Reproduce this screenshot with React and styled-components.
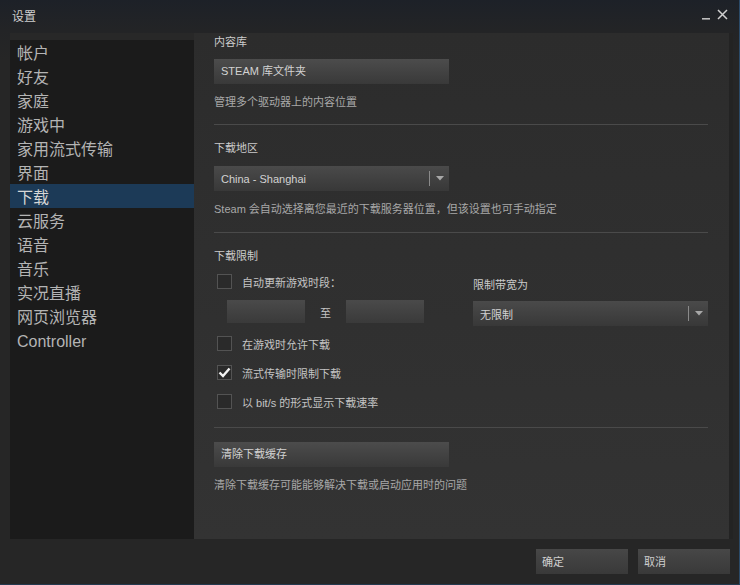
import styled, { createGlobalStyle } from 'styled-components';

const Global = createGlobalStyle`
    html, body{
        margin: 0;
        padding: 0;
        background: #262626;
    }
    *{
        box-sizing: border-box;
    }
`

const font = `"Liberation Sans", "Noto Sans CJK SC", sans-serif`;

const navItems = ['帐户', '好友', '家庭', '游戏中', '家用流式传输', '界面', '下载', '云服务', '语音', '音乐', '实况直播', '网页浏览器', 'Controller'];

const Arrow = () => (
    <svg width="8" height="5" viewBox="0 0 8 5">
        <path d="M0 0 L8 0 L4 4.5 Z" fill="#a8a8a8" />
    </svg>
);

const Check = () => (
    <svg width="13" height="11" viewBox="0 0 13 11">
        <path d="M1.5 5.5 L5 9 L11.5 1.5" stroke="#f2f2f2" strokeWidth="2.4" fill="none" />
    </svg>
);

const CheckRow = ({ checked, children }) => (
    <CheckRowStyled>
        <Box>{checked && <Check />}</Box>
        <span>{children}</span>
    </CheckRowStyled>
);

const Select = ({ value, width }) => (
    <SelectStyled $w={width}>
        <span>{value}</span>
        <div className='arrow'><Arrow /></div>
    </SelectStyled>
);

const App = () => {
    return (
        <Window>
            <Global />
            <TitleBar>
                <span>设置</span>
                <div className='controls'>
                    <svg width="9" height="10" viewBox="0 0 9 10">
                        <rect x="0" y="8" width="8" height="1.6" fill="#bdbdbd" />
                    </svg>
                    <svg width="11" height="11" viewBox="0 0 11 11">
                        <path d="M1 1 L10 10 M10 1 L1 10" stroke="#d0d0d0" strokeWidth="1.5" />
                    </svg>
                </div>
            </TitleBar>
            <Body>
                <Nav>
                    {navItems.map((item) => (
                        <NavItem key={item} $active={item === '下载'}>{item}</NavItem>
                    ))}
                </Nav>
                <Content>
                    <Label>内容库</Label>
                    <Button $top={10}>STEAM 库文件夹</Button>
                    <Desc>管理多个驱动器上的内容位置</Desc>
                    <Divider />
                    <Label $top={16}>下载地区</Label>
                    <Select value="China - Shanghai" width={235} />
                    <Desc>Steam 会自动选择离您最近的下载服务器位置，但该设置也可手动指定</Desc>
                    <Divider $top={16} />
                    <Label $top={16}>下载限制</Label>
                    <LimitRow>
                        <div className='left'>
                            <CheckRow>自动更新游戏时段：</CheckRow>
                            <TimeRow>
                                <TimeInput />
                                <span>至</span>
                                <TimeInput />
                            </TimeRow>
                        </div>
                        <div className='right'>
                            <Label $top={4}>限制带宽为</Label>
                            <Select value="无限制" width={235} />
                        </div>
                    </LimitRow>
                    <CheckList>
                        <CheckRow>在游戏时允许下载</CheckRow>
                        <CheckRow checked>流式传输时限制下载</CheckRow>
                        <CheckRow>以 bit/s 的形式显示下载速率</CheckRow>
                    </CheckList>
                    <Divider $top={18} />
                    <Button $top={14}>清除下载缓存</Button>
                    <Desc>清除下载缓存可能能够解决下载或启动应用时的问题</Desc>
                </Content>
                <Scroll />
            </Body>
            <Footer>
                <FooterButton>确定</FooterButton>
                <FooterButton>取消</FooterButton>
            </Footer>
        </Window>
    );
};

const Window = styled.div`
    width: 740px;
    height: 585px;
    display: flex;
    flex-direction: column;
    background: linear-gradient(to bottom, #1d2128 0px, #232426 30px, #262626 60px);
    border-right: 1px solid #2b4a68;
    border-bottom: 1px solid #24394f;
    font-family: ${font};
    overflow: hidden;
`

const TitleBar = styled.div`
    height: 33px;
    display: flex;
    justify-content: space-between;
    align-items: flex-start;
    padding: 7px 11px 0 12px;
    color: #cfcfcf;
    font-size: 12px;
    .controls{
        display: flex;
        gap: 6px;
        align-items: flex-end;
        margin-top: 2px;
    }
`

const Body = styled.div`
    height: 506px;
    display: flex;
    margin-left: 10px;
`

const Nav = styled.div`
    width: 184px;
    background: #1b1b1b;
    border-top: 7px solid #282828;
    font-size: 16px;
`

const NavItem = styled.div`
    height: 24px;
    line-height: 22px;
    padding: 3px 0 0 7px;
    color: ${p => p.$active ? '#d6d6d6' : '#b4b4b4'};
    background: ${p => p.$active ? '#1c3a57' : 'transparent'};
`

const Content = styled.div`
    width: 535px;
    padding: 2px 21px 0 20px;
    background: linear-gradient(to bottom, #2c2c2c, #333333);
    font-size: 11px;
    color: #c4c4c4;
`

const Scroll = styled.div`
    width: 4px;
    background: #232323;
`

const Label = styled.div`
    line-height: 14px;
    margin-top: ${p => p.$top || 0}px;
    color: #cbcbcb;
`

const Desc = styled.div`
    line-height: 14px;
    margin-top: 11px;
    color: #a8a8a8;
`

const Divider = styled.div`
    height: 1px;
    margin-top: ${p => p.$top || 15}px;
    background: #4a4a4a;
`

const Button = styled.div`
    width: 235px;
    height: 25px;
    margin-top: ${p => p.$top || 0}px;
    padding-left: 7px;
    line-height: 25px;
    color: #d2d2d2;
    background: linear-gradient(to bottom, #4c4c4c, #393939);
`

const SelectStyled = styled.div`
    width: ${p => p.$w}px;
    height: 25px;
    margin-top: 11px;
    display: flex;
    align-items: center;
    background: linear-gradient(to bottom, #4a4a4a, #383838);
    color: #d2d2d2;
    span{
        flex: 1;
        padding-left: 7px;
    }
    .arrow{
        width: 20px;
        height: 15px;
        border-left: 1px solid #8a8a8a;
        display: flex;
        align-items: center;
        justify-content: center;
    }
`

const LimitRow = styled.div`
    display: flex;
    height: 49px;
    margin-top: 11px;
    .left{
        width: 260px;
    }
    .right{
        width: 235px;
        ${SelectStyled}{
            margin-top: 9px;
        }
    }
`

const CheckRowStyled = styled.div`
    display: flex;
    align-items: center;
    height: 15px;
    padding-left: 3px;
    gap: 10px;
    color: #c4c4c4;
`

const Box = styled.div`
    width: 15px;
    height: 15px;
    border: 1px solid #535353;
    background: #2a2a2a;
    display: flex;
    align-items: center;
    justify-content: center;
`

const TimeRow = styled.div`
    display: flex;
    align-items: center;
    margin-top: 11px;
    padding-left: 13px;
    span{
        width: 41px;
        text-align: center;
        color: #c4c4c4;
    }
`

const TimeInput = styled.div`
    width: 78px;
    height: 23px;
    background: linear-gradient(to bottom, #4a4a4a, #3a3a3a);
`

const CheckList = styled.div`
    display: flex;
    flex-direction: column;
    gap: 14px;
    margin-top: 13px;
`

const Footer = styled.div`
    flex: 1;
    display: flex;
    justify-content: flex-end;
    gap: 10px;
    padding: 10px 9px 0 0;
`

const FooterButton = styled.div`
    width: 92px;
    height: 25px;
    line-height: 27px;
    padding-left: 6px;
    font-size: 11px;
    color: #cfcfcf;
    background: linear-gradient(to bottom, #474747, #393939);
`

export default App;
